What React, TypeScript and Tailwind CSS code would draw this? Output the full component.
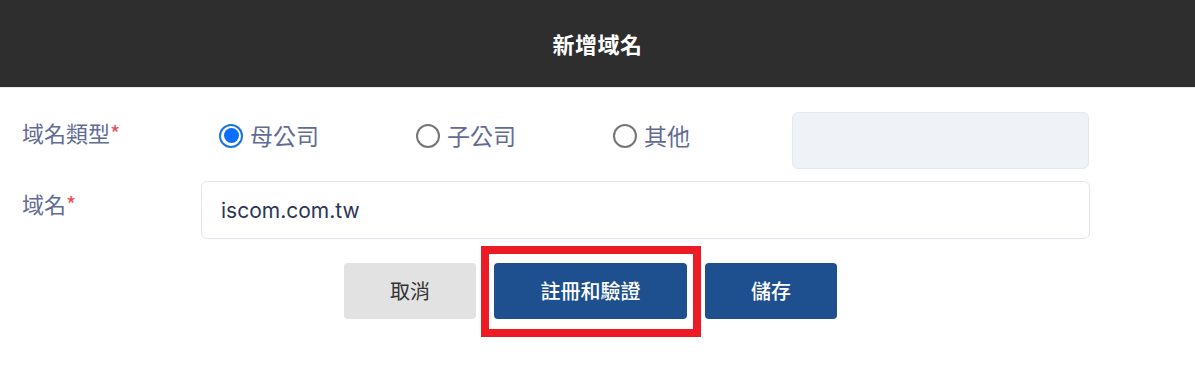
import React, { useState } from 'react';

const cjk = "font-['Noto_Sans_CJK_TC','Noto_Sans',sans-serif]";

const options = ['母公司', '子公司', '其他'];

export default function App() {
  const [kind, setKind] = useState('母公司');
  const [domain, setDomain] = useState('iscom.com.tw');

  return (
    <div className={`w-[1195px] h-[386px] bg-white ${cjk}`}>
      {/* Header */}
      <div className="h-[88px] bg-[#2e2e2e] flex items-center justify-center border-b border-[#e6ebf3]">
        <h1 className="text-[22px] font-bold text-white tracking-wide">新增域名</h1>
      </div>

      <div className="pl-[22px] pr-[105px]">
        {/* Domain type */}
        <div className="flex items-center mt-[24px]">
          <label className="w-[179px] text-[22px] text-[#616b93] self-start pt-[4px]">
            域名類型<span className="text-[#ea4c58]">*</span>
          </label>
          <div className="flex items-center">
            {options.map((opt) => (
              <button
                key={opt}
                onClick={() => setKind(opt)}
                className="w-[197px] pl-[18px] flex items-center gap-[7px] text-[23px] text-[#616b93] self-start -mt-[10px]"
              >
                {kind === opt ? (
                  <span className="w-[24px] h-[24px] rounded-full border-2 border-[#1a73e8] flex items-center justify-center">
                    <span className="w-[15px] h-[15px] rounded-full bg-[#0d6efd]" />
                  </span>
                ) : (
                  <span className="w-[24px] h-[24px] rounded-full border-2 border-[#767676]" />
                )}
                <span>{opt}</span>
              </button>
            ))}
          </div>
          <div className="w-[297px] h-[57px] rounded-[6px] bg-[#eff3f8] border border-[#e3e7ef]" />
        </div>

        {/* Domain */}
        <div className="flex items-start mt-[12px]">
          <label className="w-[179px] text-[22px] text-[#616b93] pt-[6px]">
            域名<span className="text-[#ea4c58]">*</span>
          </label>
          <input
            value={domain}
            onChange={(e) => setDomain(e.target.value)}
            className="flex-1 h-[58px] rounded-[6px] border border-[#e3e6ef] px-[19px] text-[21px] text-[#2c3556] font-['Inter',sans-serif] outline-none"
          />
        </div>

        {/* Actions */}
        <div className="flex gap-[18px] mt-[24px] pl-[322px]">
          <button className="w-[132px] h-[56px] rounded-[4px] bg-[#e2e2e2] text-[20px] text-[#333333]">
            取消
          </button>
          <div className="relative">
            <button className="w-[193px] h-[56px] rounded-[4px] bg-[#1e4f8f] text-[20px] font-medium text-white">
              註冊和驗證
            </button>
            <div className="absolute left-[-13px] right-[-14px] top-[-17px] bottom-[-18px] border-[8px] border-[#ed1c24] pointer-events-none" />
          </div>
          <button className="w-[132px] h-[56px] rounded-[4px] bg-[#1e4f8f] text-[20px] font-medium text-white">
            儲存
          </button>
        </div>
      </div>
    </div>
  );
}
